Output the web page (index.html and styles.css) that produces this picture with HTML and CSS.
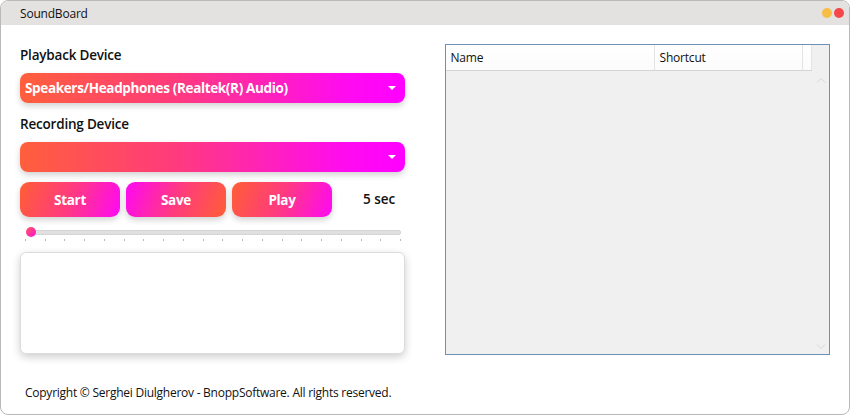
FILE: index.html
```html
<!DOCTYPE html>
<html>
<head>
<meta charset="utf-8">
<link rel="stylesheet" href="styles.css">
</head>
<body>
<div class="window">
  <div class="titlebar">
    <span class="title">SoundBoard</span>
    <div class="dots"><span class="dot yellow"></span><span class="dot red"></span></div>
  </div>
  <div class="content">
    <div class="left">
      <div class="label">Playback Device</div>
      <div class="combo"><span>Speakers/Headphones (Realtek(R) Audio)</span><span class="arrow"></span></div>
      <div class="label label2">Recording Device</div>
      <div class="combo"><span></span><span class="arrow"></span></div>
      <div class="buttons">
        <div class="btn fwd">Start</div>
        <div class="btn rev">Save</div>
        <div class="btn fwd">Play</div>
        <div class="secs">5 sec</div>
      </div>
      <div class="slider">
        <div class="track"><span class="thumb"></span></div>
        <div class="ticks"></div>
      </div>
      <div class="textbox"></div>
    </div>
    <div class="right">
      <div class="list">
        <div class="header">
          <div class="col name">Name</div>
          <div class="col shortcut">Shortcut</div>
          <div class="col filler"></div>
        </div>
        <div class="listbody">
          <div class="scroll">
            <svg width="10" height="6" viewBox="0 0 10 6"><path d="M1 5.5 L5 1.5 L9 5.5" fill="none" stroke="#d6d6d6" stroke-width="1"/></svg>
            <svg width="10" height="6" viewBox="0 0 10 6"><path d="M1 0.5 L5 4.5 L9 0.5" fill="none" stroke="#d6d6d6" stroke-width="1"/></svg>
          </div>
        </div>
      </div>
    </div>
  </div>
  <div class="footer">Copyright © Serghei Diulgherov - BnoppSoftware. All rights reserved.</div>
</div>
</body>
</html>
```
FILE: styles.css
```css
html, body {
  margin: 0;
  padding: 0;
  background: #ffffff;
}
body {
  font-family: "Open Sans", "Noto Sans", sans-serif;
  color: #000;
}
.window {
  width: 850px;
  height: 415px;
  box-sizing: border-box;
  border: 1px solid #b9b9b9;
  border-radius: 8px;
  overflow: hidden;
  background: #fff;
  display: flex;
  flex-direction: column;
}
.titlebar {
  height: 24px;
  background: #e4e1e1;
  display: flex;
  align-items: center;
  justify-content: space-between;
  padding: 0 5px 0 19px;
  flex-shrink: 0;
}
.title {
  font-size: 12px;
  letter-spacing: -0.2px;
  color: #111;
}
.dots {
  display: flex;
  gap: 2px;
}
.dot {
  width: 10px;
  height: 10px;
  border-radius: 50%;
}
.yellow { background: #f7bd45; }
.red { background: #f5474a; }
.content {
  display: flex;
  padding: 19px 19px 0 19px;
  gap: 40px;
  height: 311px;
}
.left {
  width: 385px;
  display: flex;
  flex-direction: column;
}
.label {
  font-size: 13.5px;
  font-weight: 600;
  color: #111;
  height: 22px;
  line-height: 22px;
  letter-spacing: -0.2px;
  margin-bottom: 7px;
}
.label2 {
  margin-top: 10px;
}
.combo {
  height: 30px;
  border-radius: 8px;
  background: linear-gradient(90deg, #ff5f3c 0%, #ff3b7c 40%, #ff0bf1 85%, #ff00ff 100%);
  box-shadow: 0 3px 6px rgba(0,0,0,0.18);
  display: flex;
  align-items: center;
  justify-content: space-between;
  padding: 0 9px 0 5px;
  color: #fff;
  font-weight: 700;
  font-size: 13.5px;
  letter-spacing: -0.35px;
}
.arrow {
  width: 0;
  height: 0;
  border-left: 4px solid transparent;
  border-right: 4px solid transparent;
  border-top: 4px solid #fff;
}
.buttons {
  display: flex;
  align-items: center;
  gap: 6px;
  margin-top: 10px;
  height: 35px;
}
.btn {
  width: 100px;
  height: 35px;
  border-radius: 9px;
  color: #fff;
  font-weight: 700;
  font-size: 13.5px;
  display: flex;
  align-items: center;
  justify-content: center;
  box-shadow: 0 3px 6px rgba(0,0,0,0.18);
  letter-spacing: -0.3px;
}
.fwd { background: linear-gradient(110deg, #ff5e36 0%, #ff3a80 50%, #ff08f5 100%); }
.rev { background: linear-gradient(110deg, #ff08f5 0%, #ff3a80 50%, #ff5e36 100%); }
.secs {
  margin-left: 25px;
  font-size: 13.5px;
  font-weight: 600;
  color: #111;
  margin-top: -2px;
}
.slider {
  margin-top: 9px;
  padding-left: 10px;
  width: 371px;
}
.track {
  height: 3px;
  border-radius: 2px;
  background: #e0e0e0;
  border: 1px solid #d4d4d4;
  position: relative;
  margin-top: 4px;
}
.thumb {
  position: absolute;
  left: -5px;
  top: -4px;
  width: 10px;
  height: 10px;
  border-radius: 50%;
  background: linear-gradient(135deg, #ff5a5a, #ff10d8);
}
.ticks {
  margin-top: 4px;
  margin-left: -5px;
  height: 2px;
  background: repeating-linear-gradient(90deg, #b8b8b8 0px, #b8b8b8 1px, transparent 1px, transparent 19.75px);
  width: 376px;
}
.textbox {
  margin-top: 11px;
  height: 100px;
  border: 1px solid #dcdcdc;
  border-radius: 6px;
  background: #fff;
  box-shadow: 0 3px 8px rgba(0,0,0,0.2);
}
.right {
  width: 386px;
  padding-top: 0;
}
.list {
  height: 311px;
  border: 1px solid #6e8fb6;
  background: #f0f0f0;
  box-sizing: border-box;
  display: flex;
  flex-direction: column;
}
.header {
  display: flex;
  height: 25px;
  background: linear-gradient(#ffffff, #fbfbfb);
  border-bottom: 1px solid #d5d5d5;
  width: 366px;
  flex-shrink: 0;
}
.col {
  font-size: 12px;
  line-height: 26px;
  padding-left: 5px;
  color: #111;
  border-right: 1px solid #e3e3e3;
  box-sizing: border-box;
  letter-spacing: -0.2px;
}
.name { width: 209px; }
.shortcut { width: 148px; }
.filler { width: 9px; }
.listbody {
  flex: 1;
  display: flex;
  justify-content: flex-end;
}
.scroll {
  width: 17px;
  display: flex;
  flex-direction: column;
  justify-content: space-between;
  align-items: center;
  padding: 6px 0 4px;
}
.footer {
  font-size: 12px;
  padding-left: 24px;
  margin-top: 29px;
  color: #111;
  letter-spacing: -0.25px;
}
```
